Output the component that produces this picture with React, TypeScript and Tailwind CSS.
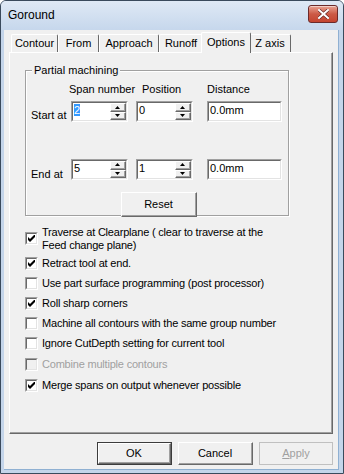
import { ReactNode } from 'react';

const FONT = "font-['Liberation_Sans',Arial,sans-serif]";

function Sunken({ className = '', children }: { className?: string; children?: ReactNode }) {
  return (
    <div className={`border-t border-l border-[#a0a0a0] border-r border-b border-r-white border-b-white ${className}`}>
      <div className="h-full border-t border-l border-[#696969] border-r border-b border-r-[#e3e3e3] border-b-[#e3e3e3] bg-white flex">
        {children}
      </div>
    </div>
  );
}

function Raised({ className = '', children }: { className?: string; children?: ReactNode }) {
  return (
    <div className={`border-t border-l border-white border-r border-b border-r-[#696969] border-b-[#696969] ${className}`}>
      <div className="h-full border-r border-b border-[#a0a0a0] bg-[#f0f0f0] flex items-center justify-center">
        {children}
      </div>
    </div>
  );
}

function Arrow({ up }: { up?: boolean }) {
  return (
    <svg width="5" height="3" viewBox="0 0 5 3" className="block">
      {up ? <path d="M0 3h5L2.5 0z" fill="#000" /> : <path d="M0 0h5L2.5 3z" fill="#000" />}
    </svg>
  );
}

function SpinField({ value, selected }: { value: string; selected?: boolean }) {
  return (
    <Sunken className="w-[57px] h-[21px]">
      <div className="flex-1 pl-[1px] pt-[1px] text-[11px] leading-[13px]">
        {selected ? <span className="bg-[#3399ff] text-white">{value}</span> : value}
      </div>
      <div className="flex flex-col w-[16px]">
        <Raised className="h-[9px]">
          <Arrow up />
        </Raised>
        <Raised className="h-[8px]">
          <Arrow />
        </Raised>
      </div>
    </Sunken>
  );
}

function Check({ checked, disabled, children }: { checked?: boolean; disabled?: boolean; children: ReactNode }) {
  return (
    <div className="flex items-center gap-[4px]">
      <div className="w-[13px] h-[13px] shrink-0 border-t border-l border-[#a0a0a0] border-r border-b border-r-white border-b-white">
        <div className={`w-full h-full border-t border-l border-[#696969] border-r border-b border-r-[#e3e3e3] border-b-[#e3e3e3] flex items-center justify-center ${disabled ? 'bg-[#f0f0f0]' : 'bg-white'}`}>
          {checked && (
            <svg width="7" height="7" viewBox="0 0 7 7" className="block">
              <path d="M0 2v3l2 2 5-5V-1L2 4z" fill="#000" />
            </svg>
          )}
        </div>
      </div>
      <div className={`text-[11px] leading-[13px] tracking-[-0.2px] ${disabled ? 'text-[#a0a0a0]' : 'text-black'}`}>{children}</div>
    </div>
  );
}

const tabs = [
  { label: 'Contour', w: 'w-[47px]' },
  { label: 'From', w: 'w-[41px]' },
  { label: 'Approach', w: 'w-[60px]' },
  { label: 'Runoff', w: 'w-[44px]' },
  { label: 'Options', w: 'w-[50px]', active: true },
  { label: 'Z axis', w: 'w-[42px]' },
];

export default function App() {
  return (
    <div className={`w-[344px] h-[474px] flex flex-col bg-[#c4d5ea] border border-[#3a4a5c] rounded-t-[6px] overflow-hidden ${FONT}`}>
      {/* Title bar */}
      <div className="h-[29px] shrink-0 flex items-start justify-between pl-[7px] pr-[5px] bg-gradient-to-b from-[#dfe9f5] to-[#c6d7ec]">
        <div className="text-[12px] leading-[14px] mt-[7px] text-black">Goround</div>
        <div className="mt-[4px] w-[30px] h-[18px] rounded-[3px] border border-[#6b2a2a] bg-gradient-to-b from-[#e8a394] via-[#cc5a46] to-[#c44430] flex items-center justify-center shadow-[inset_0_1px_0_rgba(255,255,255,0.5)]">
          <svg width="11" height="10" viewBox="0 0 11 10">
            <path d="M1 1l9 8M10 1l-9 8" stroke="#5a1f1f" strokeWidth="3.2" strokeLinecap="square" />
            <path d="M1 1l9 8M10 1l-9 8" stroke="#fff" strokeWidth="2" strokeLinecap="square" />
          </svg>
        </div>
      </div>

      {/* Client area */}
      <div className="flex-1 flex flex-col bg-[#f0f0f0] ml-[3px] mr-[4px] mb-[3px] border-r border-b border-[#8fb0d2] px-[5px] text-[11px]">
        {/* Tab strip */}
        <div className="h-[21px] mt-[1px] flex items-end pl-[2px]">
          {tabs.map((t) =>
            t.active ? (
              <div
                key={t.label}
                className={`${t.w} h-[21px] -mx-[2px] -mb-[1px] z-10 relative bg-[#f0f0f0] border-t border-l border-white border-r border-r-[#696969] rounded-t-[2px] flex items-center justify-center pb-[2px]`}
              >
                {t.label}
              </div>
            ) : (
              <div
                key={t.label}
                className={`${t.w} h-[18px] border-t border-l border-white border-r border-r-[#696969] rounded-t-[2px] flex items-center justify-center`}
              >
                {t.label}
              </div>
            )
          )}
        </div>

        {/* Tab panel */}
        <div className="h-[382px] border-t border-l border-white border-r border-b border-r-[#696969] border-b-[#696969]">
          <div className="h-full border-r border-b border-[#a0a0a0] pl-[15px] pt-[11px]">
            {/* Group box */}
            <div className="relative w-[264px] h-[146px] mt-[6px] border border-[#a0a0a0] shadow-[inset_1px_1px_0_#fff,1px_1px_0_#fff]">
              <div className="absolute -top-[7px] left-[6px] px-[2px] bg-[#f0f0f0] leading-[13px]">Partial machining</div>

              <div className="pl-[43px] pt-[12px] flex leading-[13px]">
                <div className="w-[73px]">Span number</div>
                <div className="w-[65px]">Position</div>
                <div>Distance</div>
              </div>

              <div className="flex items-center mt-[4px]">
                <div className="w-[45px] pl-[5px] pt-[7px]">Start at</div>
                <SpinField value="2" selected />
                <div className="w-[8px]" />
                <SpinField value="0" />
                <div className="w-[14px]" />
                <Sunken className="w-[75px] h-[21px]">
                  <div className="pl-[1px] pt-[1px] leading-[13px]">0.0mm</div>
                </Sunken>
              </div>

              <div className="flex items-center mt-[33px]">
                <div className="w-[45px] pl-[5px] pt-[9px]">End at</div>
                <SpinField value="5" />
                <div className="w-[8px]" />
                <SpinField value="1" />
                <div className="w-[14px]" />
                <Sunken className="w-[75px] h-[21px]">
                  <div className="pl-[1px] pt-[1px] leading-[13px]">0.0mm</div>
                </Sunken>
              </div>

              <div className="flex mt-[10px] pl-[95px]">
                <Raised className="w-[76px] h-[25px]">
                  <span>Reset</span>
                </Raised>
              </div>
            </div>

            {/* Options */}
            <div className="flex flex-col mt-[8px]">
              <div className="h-[29px] flex items-center">
                <Check checked>
                  Traverse at Clearplane ( clear to traverse at the
                  <br />
                  Feed change plane)
                </Check>
              </div>
              <div className="h-[20px] flex items-center">
                <Check checked>Retract tool at end.</Check>
              </div>
              <div className="h-[20px] flex items-center">
                <Check>Use part surface programming (post processor)</Check>
              </div>
              <div className="h-[20px] flex items-center">
                <Check checked>Roll sharp corners</Check>
              </div>
              <div className="h-[20px] flex items-center">
                <Check>Machine all contours with the same group number</Check>
              </div>
              <div className="h-[20px] flex items-center">
                <Check>Ignore CutDepth setting for current tool</Check>
              </div>
              <div className="h-[22px] flex items-center">
                <Check disabled>Combine multiple contours</Check>
              </div>
              <div className="h-[20px] flex items-center">
                <Check checked>Merge spans on output whenever possible</Check>
              </div>
            </div>
          </div>
        </div>

        {/* Buttons */}
        <div className="flex justify-end gap-[6px] mt-[8px]">
          <div className="border border-[#3c3c3c]">
            <Raised className="w-[73px] h-[21px]">OK</Raised>
          </div>
          <Raised className="w-[75px] h-[23px]">Cancel</Raised>
          <div className="w-[74px] h-[23px] border border-[#c0c0c0] flex items-center justify-center text-[#a0a0a0]">
            <span>
              <span className="underline">A</span>pply
            </span>
          </div>
        </div>
      </div>
    </div>
  );
}
